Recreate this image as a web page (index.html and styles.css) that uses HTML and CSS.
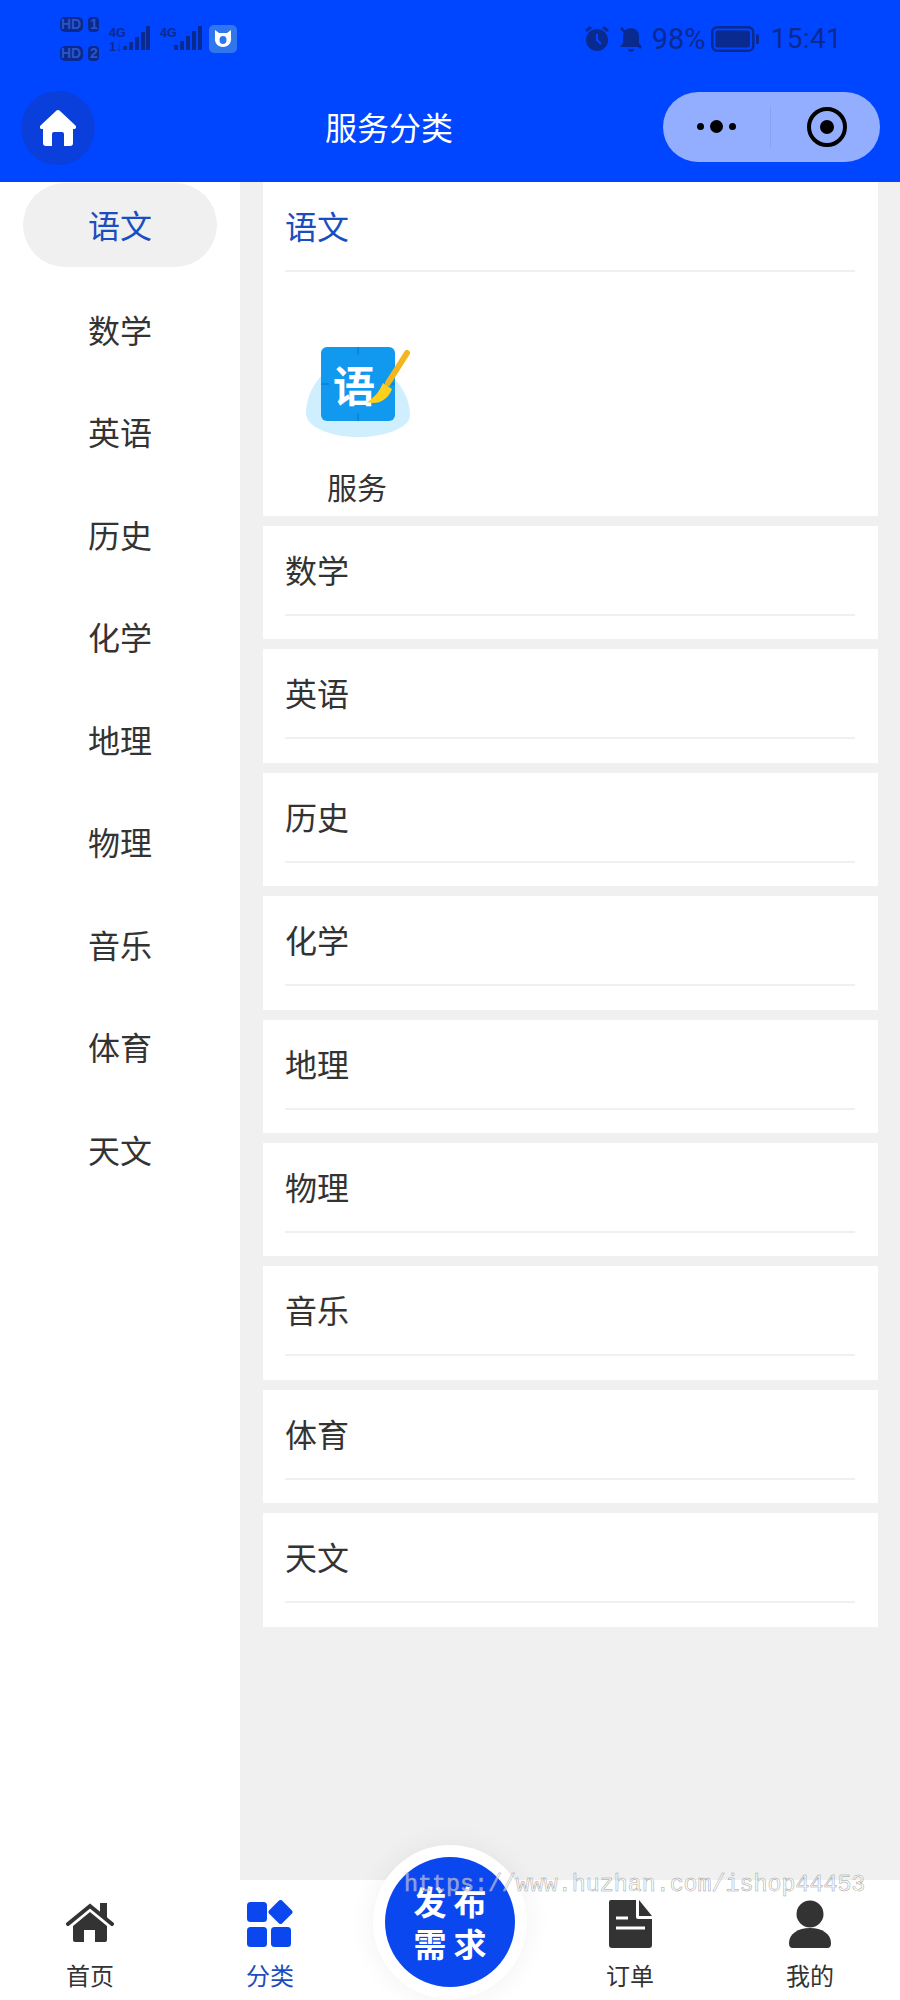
FILE: index.html
```html
<!DOCTYPE html>
<html lang="zh-CN">
<head>
<meta charset="utf-8">
<title>服务分类</title>
<link rel="stylesheet" href="styles.css">
</head>
<body>
<div class="app">
  <header class="header">
    <div class="status">
      <svg class="status-left" width="178" height="48" viewBox="60 15 178 48">
        <g fill="#0b2a90">
          <rect x="60" y="17" width="23" height="15" rx="5"/><rect x="88" y="17" width="11" height="15" rx="4"/>
          <rect x="60" y="46" width="23" height="15" rx="5"/><rect x="88" y="46" width="11" height="15" rx="4"/>
          <rect x="123" y="46" width="4" height="4"/><rect x="129" y="42" width="4" height="8"/><rect x="135" y="37" width="4" height="13"/><rect x="141" y="32" width="4" height="18"/><rect x="146" y="26" width="4" height="24"/>
          <rect x="174" y="45" width="4" height="5"/><rect x="180" y="41" width="4" height="9"/><rect x="186" y="36" width="4" height="14"/><rect x="192" y="31" width="4" height="19"/><rect x="198" y="26" width="4" height="24"/>
          <text class="tiny" x="109" y="37">4G</text><text class="tiny" x="160" y="37">4G</text><text class="tiny" x="109" y="51">1↓</text>
        </g>
        <g class="hd">
          <text x="61" y="29">HD</text><text x="90" y="29">1</text><text x="61" y="58">HD</text><text x="90" y="58">2</text>
        </g>
        <rect x="209" y="25" width="28" height="28" rx="5" fill="#3077ee"/>
        <path d="M215 30l4 3h8l4-3v7c1 6-3 10-8 10s-9-4-8-10z" fill="#fff"/>
        <ellipse cx="223" cy="40" rx="3.500" ry="4" fill="#3077ee"/>
      </svg>
      <div class="status-right">
        <svg width="60" height="28" viewBox="0 0 60 28">
          <g fill="#0b2a90">
            <circle cx="13" cy="15" r="11"/><path d="M1 5l5-4 2 2-5 4zM25 5l-5-4-2 2 5 4z"/>
            <path d="M47 3a8 8 0 0 1 8 8v7l3 4H36l3-4v-7a8 8 0 0 1 8-8zM44 24h6a3 3 0 0 1-6 0z"/>
          </g>
          <path d="M13 9v6l4 4" stroke="#0045ff" stroke-width="2" fill="none"/>
          <path d="M37 3l20 20" stroke="#0b2a90" stroke-width="2.500"/>
        </svg>
        <span class="pct">98%</span>
        <svg width="48" height="26" viewBox="0 0 48 26">
          <rect x="1.250" y="1.250" width="41" height="23.500" rx="5" fill="none" stroke="#0b2a90" stroke-width="2.500"/>
          <rect x="4.500" y="4.500" width="34.500" height="17" rx="2" fill="#0b2a90"/>
          <rect x="45" y="8" width="3" height="10" rx="1.500" fill="#0b2a90"/>
        </svg>
        <span class="clock">15:41</span>
      </div>
    </div>
    <div class="nav">
      <div class="home-btn">
        <svg width="38" height="38" viewBox="0 0 38 38"><path d="M19 1a3 3 0 0 1 2 1l15 14c2 2 1 4-1 4h-1v14a3 3 0 0 1-3 3h-6V25a2 2 0 0 0-2-2h-8a2 2 0 0 0-2 2v12H7a3 3 0 0 1-3-3V20H3c-2 0-3-2-1-4L17 2a3 3 0 0 1 2-1z" fill="#fff"/></svg>
      </div>
      <div class="nav-title">服务分类</div>
      <div class="capsule">
        <div class="capsule-dots"><i class="dot"></i><i class="dot dot-big"></i><i class="dot"></i></div>
        <div class="capsule-line"></div>
        <div class="capsule-target"><i></i></div>
      </div>
    </div>
  </header>

  <main class="main">
    <aside class="sidebar">
      <div class="side-item active">语文</div>
      <div class="side-item">数学</div>
      <div class="side-item">英语</div>
      <div class="side-item">历史</div>
      <div class="side-item">化学</div>
      <div class="side-item">地理</div>
      <div class="side-item">物理</div>
      <div class="side-item">音乐</div>
      <div class="side-item">体育</div>
      <div class="side-item">天文</div>
    </aside>
    <section class="content">
      <div class="card card-open">
        <div class="card-head active-text">语文</div>
        <div class="service">
          <svg class="service-icon" width="104" height="90" viewBox="0 0 104 90">
            <path d="M0 66C0 46 14 24 30 20h40c16 4 34 26 34 48 0 14-28 22-52 22C24 90 0 80 0 66z" fill="#cfeefe"/>
            <rect x="15" y="0" width="74" height="74" rx="6" fill="#1199ef"/>
            <path d="M52 0v8M52 66v8M15 37h8M81 37h8" stroke="#0b86dc" stroke-width="2"/>
            <text class="icon-char" x="27" y="55">语</text>
            <path d="M101 6L82 36" stroke="#f4b61f" stroke-width="6" stroke-linecap="round"/>
            <path d="M61 55c7-4 12-10 16-19l9 6c-3 9-13 17-25 13z" fill="#fcd01e"/>
          </svg>
          <div class="service-name">服务</div>
        </div>
      </div>
      <div class="card"><div class="card-head">数学</div></div>
      <div class="card"><div class="card-head">英语</div></div>
      <div class="card"><div class="card-head">历史</div></div>
      <div class="card"><div class="card-head">化学</div></div>
      <div class="card"><div class="card-head">地理</div></div>
      <div class="card"><div class="card-head">物理</div></div>
      <div class="card"><div class="card-head">音乐</div></div>
      <div class="card"><div class="card-head">体育</div></div>
      <div class="card"><div class="card-head">天文</div></div>
    </section>
  </main>

  <nav class="tabbar">
    <div class="tab">
      <svg class="tab-icon" width="48" height="48" viewBox="0 0 48 48"><path d="M2 24L24 6l22 18" fill="none" stroke="#333" stroke-width="4" stroke-linecap="round"/><path d="M34 3h7v16l-7-6z" fill="#333"/><path d="M24 12l17 14v14a2 2 0 0 1-2 2H29V30H18v12H9a2 2 0 0 1-2-2V26z" fill="#333"/></svg>
      <span class="tab-label">首页</span>
    </div>
    <div class="tab tab-on">
      <svg class="tab-icon" width="48" height="48" viewBox="2 1 48 48"><g fill="#0a47ef"><rect x="3" y="3" width="20" height="20" rx="3.500"/><rect x="3" y="28" width="20" height="20" rx="3.500"/><rect x="27" y="28" width="20" height="20" rx="3.500"/><path d="M35 1.500a2.500 2.500 0 0 1 3 0l10 10a2.500 2.500 0 0 1 0 3l-10 10a2.500 2.500 0 0 1-3 0l-10-10a2.500 2.500 0 0 1 0-3z"/></g></svg>
      <span class="tab-label">分类</span>
    </div>
    <div class="tab tab-empty"></div>
    <div class="tab">
      <svg class="tab-icon" width="48" height="48" viewBox="0 0 48 48"><path d="M5 0h25v17a2 2 0 0 0 2 2h14v26a3 3 0 0 1-3 3H6a3 3 0 0 1-3-3V2a2 2 0 0 1 2-2z" fill="#333"/><path d="M33 0l13 16H33z" fill="#333"/><path d="M10 18h12M10 28h29" stroke="#fff" stroke-width="3"/></svg>
      <span class="tab-label">订单</span>
    </div>
    <div class="tab">
      <svg class="tab-icon" width="48" height="48" viewBox="0 0 48 48"><circle cx="24" cy="14" r="13.500" fill="#333"/><path d="M3 43c0-9 9-15 21-15s21 6 21 15c0 3-1 5-4 5H7c-3 0-4-2-4-5z" fill="#333"/></svg>
      <span class="tab-label">我的</span>
    </div>
  </nav>

  <div class="publish"><div class="publish-inner"><span>发布</span><span>需求</span></div></div>
  <div class="watermark">https://www.huzhan.com/ishop44453</div>
</div>
</body>
</html>
```
FILE: styles.css
```css
* { box-sizing: border-box; }
html, body { margin: 0; padding: 0; }
body {
  width: 900px;
  height: 2000px;
  overflow: hidden;
  background: #fff;
  font-family: "Noto Sans CJK SC", "Noto Sans", sans-serif;
  color: #333;
}
.app { position: relative; width: 900px; height: 2000px; display: flex; flex-direction: column; }

.header { height: 182px; flex: none; background: #0045ff; display: flex; flex-direction: column; }
.status { height: 73px; padding: 4px 58px 0 60px; display: flex; align-items: center; justify-content: space-between; }
.status-left { display: block; }
.status-left .tiny { font: 700 12.500px "Liberation Sans", sans-serif; fill: #0b2a90; }
.hd text { font: 700 14px "Liberation Sans", sans-serif; fill: #2a55c8; }
.status-right { display: flex; align-items: center; color: #0b2a90; }
.pct { font: 400 29px "Roboto", sans-serif; margin-left: 8px; width: 59px; white-space: nowrap; }
.clock { font: 400 28px "Roboto", sans-serif; margin-left: 12px; letter-spacing: 0.300px; }

.nav { height: 109px; padding-left: 21px; padding-right: 20px; display: flex; align-items: center; }
.home-btn { width: 74px; height: 74px; border-radius: 50%; background: #0a3fdc; display: flex; align-items: center; justify-content: center; }
.nav-title { margin-left: 230px; padding-bottom: 4px; font-size: 32px; color: #fff; white-space: nowrap; }
.capsule { margin-left: auto; margin-bottom: 2px; width: 217px; height: 70px; border-radius: 35px; background: #94aeff; display: flex; align-items: center; }
.capsule-dots { width: 107px; display: flex; align-items: center; justify-content: center; gap: 6px; }
.dot { width: 7px; height: 7px; border-radius: 50%; background: #000; display: block; }
.dot-big { width: 13px; height: 13px; }
.capsule-line { width: 1px; height: 42px; background: #88a3f2; }
.capsule-target { width: 40px; height: 40px; margin-left: 36px; border: 4.500px solid #000; border-radius: 50%; display: flex; align-items: center; justify-content: center; }
.capsule-target i { display: block; width: 14px; height: 14px; border-radius: 50%; background: #000; }

.main { flex: 1; min-height: 0; display: flex; }
.sidebar { width: 240px; flex: none; background: #fff; padding: 1px 23px 0; display: flex; flex-direction: column; gap: 18.500px; }
.side-item { height: 84px; padding-bottom: 2px; display: flex; align-items: center; justify-content: center; font-size: 32px; color: #333; flex: none; }
.side-item.active { background: #f0f0f0; border-radius: 42px; color: #1a4dbf; margin-bottom: 2px; }
.content { flex: 1; min-width: 0; background: #f0f0f0; padding: 0 22.500px; display: flex; flex-direction: column; gap: 10px; overflow: hidden; }
.card { height: 113.400px; flex: none; background: #fff; padding: 0 23px 0 22.500px; }
.card-open { height: 334px; }
.card-head { height: 90px; padding-bottom: 2px; border-bottom: 2.500px solid #f0f0f0; display: flex; align-items: center; font-size: 32px; color: #333; }
.active-text { color: #1a4dbf; }
.service { width: 124px; padding-top: 75px; margin-left: 11px; display: flex; flex-direction: column; align-items: center; }
.service-icon { display: block; }
.service-name { font-size: 30px; line-height: 40px; margin-top: 29px; margin-left: -2px; color: #333; }
.icon-char { font: 700 42px "Noto Sans CJK SC", sans-serif; fill: #fff; }

.tabbar { height: 120px; flex: none; background: #fff; display: grid; grid-template-columns: repeat(5, 180px); }
.tab { display: flex; flex-direction: column; align-items: center; padding-top: 20px; }
.tab-icon { display: block; }
.tab-label { font-size: 24px; line-height: 34px; margin-top: 10px; color: #333; }
.tab-on .tab-label { color: #1a4dbf; }

.publish { position: absolute; left: 373px; top: 1845px; width: 154px; height: 154px; border-radius: 50%; background: #fff; box-shadow: 0 0 28px rgba(0,0,0,0.060); display: flex; align-items: center; justify-content: center; }
.publish-inner { width: 130px; height: 130px; border-radius: 50%; background: #0a47ef; color: #fff; font-size: 33px; font-weight: 700; line-height: 42px; display: flex; flex-direction: column; align-items: center; justify-content: center; letter-spacing: 7px; }
.publish-inner span { display: block; margin-right: -7px; }

.watermark { position: absolute; left: 404px; top: 1870px; font-family: "Liberation Mono", monospace; font-size: 23.300px; line-height: 30px; white-space: nowrap; color: rgba(255,255,255,0.500); -webkit-text-stroke: 0.500px #a0a0a0; }
```
